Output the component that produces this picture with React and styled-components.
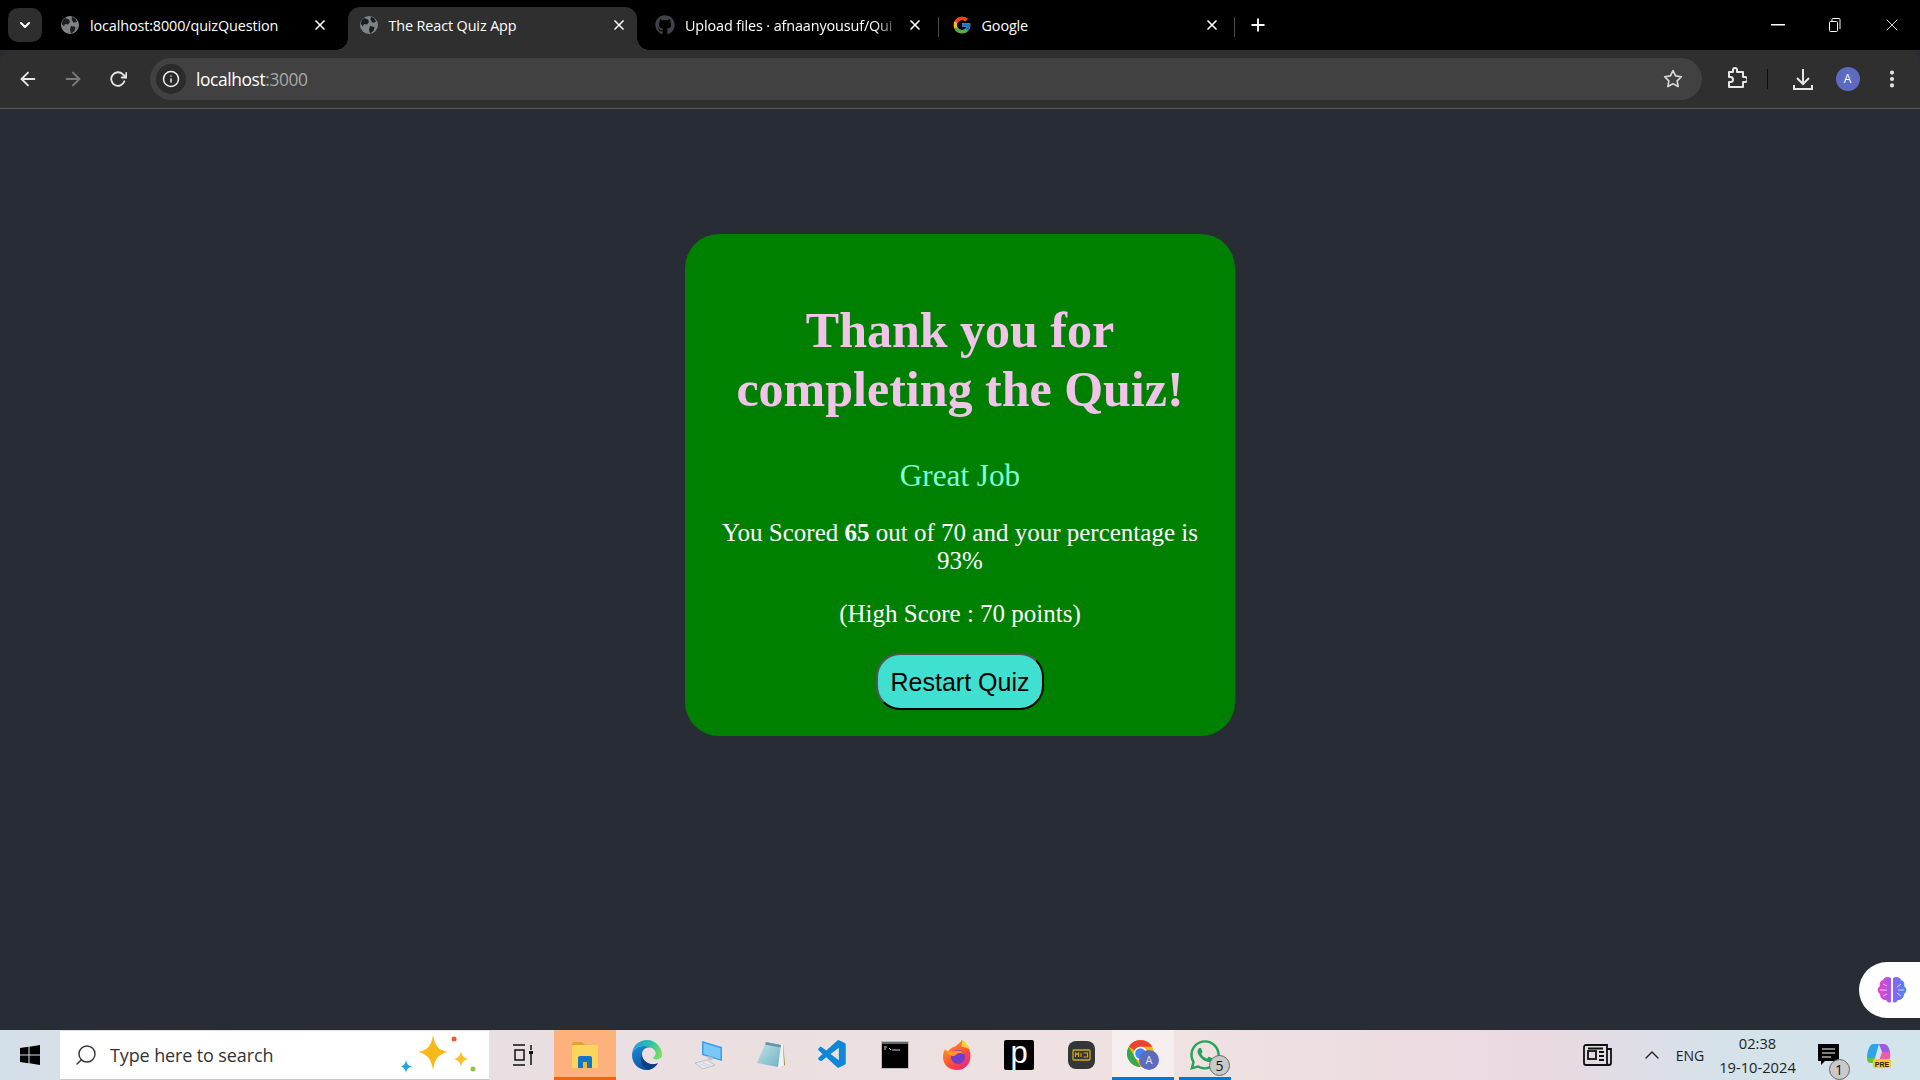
import React from 'react';
import styled, { createGlobalStyle } from 'styled-components';
import { FaGithub, FaWhatsapp } from 'react-icons/fa';
import { FcGoogle } from 'react-icons/fc';
import { VscVscode } from 'react-icons/vsc';
import { FiArrowLeft, FiArrowRight, FiRotateCw, FiInfo, FiStar, FiX, FiPlus, FiMoreVertical, FiChevronDown, FiChevronUp, FiSearch } from 'react-icons/fi';

const GlobalStyle = createGlobalStyle`
  html, body { margin: 0; padding: 0; height: 100%; overflow: hidden; }
  #root { height: 100%; }
  * { box-sizing: border-box; }
`;

const Screen = styled.div`
  width: 1920px;
  height: 1080px;
  display: flex;
  flex-direction: column;
  position: relative;
  background-color: #282c34;
  font-family: "Open Sans", "Liberation Sans", sans-serif;
`;

const TabStrip = styled.div`
  height: 50px;
  background: #000;
  display: flex;
  align-items: flex-end;
  padding-left: 8px;
  flex-shrink: 0;
`;

const TabListButton = styled.div`
  width: 34px;
  height: 34px;
  margin: 0 8px 8px 0;
  border-radius: 10px;
  background: #2e2e2e;
  color: #fff;
  display: flex;
  align-items: center;
  justify-content: center;
`;

const Tab = styled.div`
  width: ${p => (p.$active ? '289px' : '297.5px')};
  margin-right: ${p => (p.$active ? '8.5px' : '0')};
  height: 43px;
  padding: 0 0 7px ${p => (p.$active ? '11px' : '10px')};
  display: flex;
  align-items: center;
  position: relative;
  color: #fff;
  font-size: 14.4px;
  letter-spacing: -0.12px;
  border-radius: 12px 12px 0 0;
  background: ${p => (p.$active ? '#2f2f2f' : 'transparent')};

  ${p => p.$active && `
    &::before, &::after {
      content: '';
      position: absolute;
      bottom: 0;
      width: 12px;
      height: 12px;
      background: radial-gradient(circle at ${'var(--c)'} 0, #000 11.5px, #2f2f2f 12px);
    }
    &::before { left: -12px; --c: 0; }
    &::after { right: -12px; --c: 100%; }
  `}
`;

const Favicon = styled.div`
  width: 20px;
  height: 20px;
  flex-shrink: 0;
  margin-right: 10px;
  display: flex;
  align-items: center;
  justify-content: center;
  color: #3f4347;
`;

const TabTitle = styled.div`
  width: 216px;
  white-space: nowrap;
  ${p => p.$fade && `-webkit-mask-image: linear-gradient(90deg, #000 88%, transparent);`}
`;

const TabClose = styled.div`
  width: 20px;
  margin-left: 4px;
  display: flex;
  justify-content: center;
  color: #fff;
`;

const TabSeparator = styled.div`
  width: 1px;
  height: 20px;
  background: #4a4a4a;
  margin: 0 3px 13px -5px;
  flex-shrink: 0;
`;

const NewTab = styled.div`
  width: 24px;
  height: 36px;
  margin: 0 0 7px 8px;
  display: flex;
  align-items: center;
  justify-content: center;
  color: #fff;
`;

const WindowControls = styled.div`
  margin-left: auto;
  display: flex;
  height: 50px;
  align-items: center;
  padding-bottom: 1px;
`;

const WindowButton = styled.div`
  width: 57px;
  display: flex;
  justify-content: center;
  color: #fff;
`;

const Toolbar = styled.div`
  height: 59px;
  background: #2f2f2f;
  border-bottom: 1px solid #5a5a5a;
  border-radius: 12px 12px 0 0;
  display: flex;
  align-items: center;
  padding: 0 0 1px 5px;
  flex-shrink: 0;
`;

const NavButton = styled.div`
  width: ${p => p.$w || 45}px;
  display: flex;
  justify-content: center;
  align-items: center;
  color: ${p => (p.$dim ? '#7b7b7b' : '#e6e6e6')};
`;

const Omnibox = styled.div`
  width: 1552px;
  height: 42px;
  margin: 0 12px 0 10px;
  background: #414141;
  border-radius: 21px;
  display: flex;
  align-items: center;
  padding: 0 19px 0 6px;
`;

const SiteInfo = styled.div`
  width: 30px;
  height: 30px;
  border-radius: 50%;
  background: #2b2b2b;
  color: #f0f0f0;
  display: flex;
  align-items: center;
  justify-content: center;
  margin-right: 10px;
`;

const Url = styled.div`
  flex: 1;
  font-size: 17.4px;
  letter-spacing: -0.4px;
  color: #fff;
  span { color: #a8a8a8; }
`;

const ToolbarDivider = styled.div`
  width: 1px;
  height: 20px;
  background: #0c0c0c;
  margin: 0 4.5px 0 9px;
`;

const Avatar = styled.div`
  width: 24px;
  height: 24px;
  border-radius: 50%;
  background: #5c6bc0;
  color: #fff;
  font-size: 12px;
  display: flex;
  align-items: center;
  justify-content: center;
  margin: 0 18.5px 0 3px;
`;

const Page = styled.main`
  flex: 1;
  display: flex;
  justify-content: center;
  align-items: flex-start;
  padding-top: 125px;
`;

const Card = styled.section`
  width: 550px;
  background-color: #008000;
  border-radius: 34px;
  padding: 67px 30px 26px;
  display: flex;
  flex-direction: column;
  align-items: center;
  text-align: center;
  font-family: "Liberation Serif", "Times New Roman", serif;
  color: #fff;
`;

const Title = styled.h1`
  font-size: 50px;
  font-weight: bold;
  line-height: 58.6px;
  margin: 0;
  color: #f2c4ea;
`;

const Verdict = styled.h2`
  font-size: 31.2px;
  line-height: 34px;
  font-weight: normal;
  margin: 41px 0 0;
  color: #7fffd4;
`;

const ScoreLine = styled.p`
  font-size: 25px;
  line-height: 27.6px;
  margin: 26px 0 0;
`;

const RestartButton = styled.button`
  width: 168px;
  height: 57px;
  margin-top: 25.5px;
  padding: 2px 0 0;
  font-family: "Liberation Sans", Arial, sans-serif;
  font-size: 25px;
  color: #000;
  background: #40e0d0;
  border: 2px outset #000;
  border-radius: 24px;
`;

const FloatingWidget = styled.div`
  position: absolute;
  right: 0;
  top: 962px;
  width: 61px;
  height: 56px;
  background: #fff;
  border-radius: 28px 0 0 28px;
  display: flex;
  align-items: center;
  padding-left: 18px;
`;

const Taskbar = styled.footer`
  height: 50px;
  flex-shrink: 0;
  display: flex;
  align-items: stretch;
  background: linear-gradient(90deg, #d3dfe9 0%, #e6dfe4 12%, #ecdfe0 40%, #efe2e1 62%, #ead9e2 80%, #d5e2ea 90%, #d3e4ec 100%);
  color: #1c1c1c;
  position: relative;
`;

const StartButton = styled.div`
  width: 60px;
  display: flex;
  align-items: center;
  justify-content: center;
`;

const SearchBox = styled.div`
  width: 429px;
  margin-top: 1px;
  background: #fff;
  border-bottom: 1px solid #c9c9c9;
  display: flex;
  align-items: center;
  padding: 0 8px 0 14px;
  font-size: 18px;
  letter-spacing: -0.12px;
  color: #333;
`;

const SearchText = styled.div`
  flex: 1;
  margin-left: 12px;
`;

const TaskItem = styled.div`
  width: 62px;
  display: flex;
  align-items: center;
  justify-content: center;
  position: relative;
  background: ${p => p.$bg || 'transparent'};

  ${p => p.$bar && `
    &::after {
      content: '';
      position: absolute;
      left: ${p.$inset ? '5px' : '0'};
      right: ${p.$inset ? '5px' : '0'};
      bottom: 0;
      height: 3px;
      background: ${p.$bar};
    }
  `}
`;

const TaskItems = styled.div`
  display: flex;
  margin-left: 3px;
`;

const PLogo = styled.div`
  width: 30px;
  height: 30px;
  border-radius: 2px;
  background: #000;
  color: #fff;
  font-family: "Liberation Sans", sans-serif;
  font-size: 31px;
  line-height: 25px;
  text-align: center;
`;

const CountBadge = styled.div`
  position: absolute;
  right: ${p => p.$right}px;
  bottom: ${p => p.$bottom}px;
  width: 21px;
  height: 21px;
  border-radius: 50%;
  background: #c9c9c9;
  border: 1px solid #666;
  color: #111;
  font-size: 14px;
  line-height: 19px;
  text-align: center;
`;

const Tray = styled.div`
  margin-left: auto;
  display: flex;
  align-items: center;
  padding-right: 13.5px;
`;

const TrayItem = styled.div`
  width: ${p => p.$w}px;
  display: flex;
  align-items: center;
  justify-content: center;
  position: relative;
  font-size: 14px;
  color: #222;
`;

const Clock = styled.div`
  width: 96px;
  margin-left: 2.5px;
  text-align: center;
  font-size: 14.7px;
  line-height: 24px;
  color: #222;
`;

const GlobeIcon = () => (
  <svg width="18" height="18" viewBox="0 0 18 18">
    <circle cx="9" cy="9" r="9" fill="#7f8387" />
    <path d="M4 2 8 3.500l1 2.500-2 2.500-3-.5-1 2.500L.8 8C1 5.500 2.400 3 4 2zM10 10l4.500 1-1 4-3.500 2.500L9 13.500zM11 .8l3.500 1.700L16 6l-3.500.7L10.500 3.500z" fill="#1b1d20" />
  </svg>
);

const RestoreIcon = () => (
  <svg width="14" height="14" viewBox="0 0 14 14" fill="none" stroke="#fff" strokeWidth="1">
    <rect x="1.500" y="3.500" width="8" height="10" rx="1" />
    <path d="M4 3.500V1.500a1 1 0 0 1 1-1h6a1 1 0 0 1 1 1V11" />
  </svg>
);

const ExtensionIcon = () => (
  <svg width="22" height="24" viewBox="0 0 22 24" fill="none" stroke="#e6e6e6" strokeWidth="2" strokeLinejoin="round">
    <path d="M4 5h4V3a2 2 0 0 1 4 0v2h6v5h2a2.500 2.500 0 0 1 0 5h-2v5H4v-5h1.500a2.500 2.500 0 0 0 0-5H4z" />
  </svg>
);

const DownloadIcon = () => (
  <svg width="22" height="24" viewBox="0 0 22 24" fill="none" stroke="#e6e6e6" strokeWidth="2">
    <path d="M11 2v14M5 11l6 6 6-6M2 18v4h18v-4" />
  </svg>
);

const WindowsLogo = () => (
  <svg width="20" height="20" viewBox="0 0 20 20" fill="#000">
    <path d="M0 3l8.500-1.200v7.700H0zM9.500 1.700L20 0v9.500H9.500zM0 10.500h8.500v7.700L0 17zM9.500 10.500H20V20L9.500 18.300z" />
  </svg>
);

const Sparkles = () => (
  <svg width="80" height="42" viewBox="0 0 80 42">
    <path d="M32 1c2 12 6 15 15 17-9 2-13 6-15 18-2-12-6-16-15-18 9-2 13-5 15-17z" fill="#f9b81a" />
    <path d="M60 17c1 5 3 7 7 8-4 1-6 3-7 8-1-5-3-7-7-8 4-1 6-3 7-8z" fill="#f9c02c" />
    <path d="M5 26c.8 4 2 5.500 6 6.500-4 1-5.200 2.500-6 6.500-.8-4-2-5.500-5-6.500 3-1 4.200-2.500 5-6.500z" fill="#1ea7e8" />
    <circle cx="53" cy="5" r="2.500" fill="#ef5b25" />
    <circle cx="72" cy="35" r="2.500" fill="#8cc63f" />
  </svg>
);

const TaskViewIcon = () => (
  <svg width="22" height="22" viewBox="0 0 22 22" fill="none" stroke="#111" strokeWidth="1.500">
    <path d="M1 1h12M1 21h12M3 6h9v10H3zM19 1v5M19 10v11" />
    <rect x="17" y="7" width="4" height="3" fill="#111" stroke="none" />
  </svg>
);

const ExplorerIcon = () => (
  <svg width="28" height="28" viewBox="0 0 28 28">
    <path d="M1 3a2 2 0 0 1 2-2h8l3 3h-13z" fill="#e0a526" />
    <rect x="1" y="4" width="26" height="23" rx="1.500" fill="#fcd55f" />
    <path d="M7 27V17a2 2 0 0 1 2-2h10a2 2 0 0 1 2 2v10h-5v-6h-4v6z" fill="#1673c9" />
    <rect x="12" y="21" width="4" height="6" fill="#f5b81d" />
  </svg>
);

const EdgeIcon = () => (
  <svg width="30" height="30" viewBox="0 0 30 30">
    <defs>
      <linearGradient id="edgeTop" x1="0" y1="0.3" x2="1" y2="0.6">
        <stop offset="0" stopColor="#1c9bd8" />
        <stop offset=".55" stopColor="#2cc3a8" />
        <stop offset="1" stopColor="#7fdc62" />
      </linearGradient>
      <linearGradient id="edgeBody" x1="0" y1="0" x2="0.6" y2="1">
        <stop offset="0" stopColor="#1a8ed8" />
        <stop offset="1" stopColor="#0c4f9c" />
      </linearGradient>
    </defs>
    <path d="M15 0C6.500 0 0 6.500 0 15c0-5 5-9 12-9 6 0 10 2.500 11.500 6 .5 1.500 0 3.500-1.500 5-1 1-1 1.500 0 2 3 1 8 .2 8-4C30 7 23.500 0 15 0z" fill="url(#edgeTop)" />
    <path d="M0 15c0-5 5-9 12-9 3 0 6 .8 8 2-5-1.500-10 1-10 6.500 0 6 6 10.500 13 9.500 1 0 2-.4 3-.8-3 4-7 6.800-11.500 6.800C6.500 30 0 23.500 0 15z" fill="url(#edgeBody)" />
    <path d="M10 14.500c0 6 6 10.500 13 9.500 1 0 2-.4 3-.8-3 4-6 6-9 6.500-6-1-10-7-7-15.200z" fill="#0a3f86" />
  </svg>
);

const PcIcon = () => (
  <svg width="30" height="28" viewBox="0 0 30 28">
    <path d="M8 0l20 6v14L8 14z" fill="#3a9fe6" />
    <path d="M9.500 2l17 5.200v11L9.500 13z" fill="#79c8f7" />
    <path d="M14 15l5 1.500-1 3-4-1z" fill="#b9c2c9" />
    <path d="M1 22l12-3 8 5-12 4z" fill="#e6eaee" stroke="#a9b2ba" strokeWidth=".7" />
    <path d="M5 22.500l8 3M8 21.500l8 3" stroke="#b9c2c9" strokeWidth=".6" />
  </svg>
);

const NotepadIcon = () => (
  <svg width="28" height="28" viewBox="0 0 28 28">
    <defs>
      <linearGradient id="padFill" x1="0" y1="0" x2="1" y2="1">
        <stop offset="0" stopColor="#c4e4ea" />
        <stop offset="1" stopColor="#6fb1c2" />
      </linearGradient>
    </defs>
    <path d="M26 2l2 22-3 2z" fill="#a5884e" />
    <path d="M23 3l3 0 1 22-7 2z" fill="#f1f3f3" />
    <path d="M9 1l15 3-3 22L0 22z" fill="url(#padFill)" />
    <path d="M9 1l15 3-.5 2.500L8 3.500z" fill="#5f95a5" />
  </svg>
);

const TerminalIcon = () => (
  <svg width="28" height="28" viewBox="0 0 28 28">
    <rect x="0" y="0" width="28" height="28" fill="#b9bdc0" />
    <rect x="1" y="1" width="26" height="2" fill="#5c6870" />
    <rect x="1" y="3" width="26" height="24" fill="#000" />
    <path d="M3 6h3M3 8h2M8 7l2 2M11 9h8" stroke="#ccc" strokeWidth="1" />
  </svg>
);

const FirefoxIcon = () => (
  <svg width="28" height="30" viewBox="0 0 28 30">
    <defs>
      <linearGradient id="foxA" x1="0.1" y1="0.1" x2="0.8" y2="1">
        <stop offset="0" stopColor="#ff9a1f" />
        <stop offset=".6" stopColor="#ff4b3a" />
        <stop offset="1" stopColor="#e8208a" />
      </linearGradient>
    </defs>
    <path d="M19 0c4 3 7 7 8 12 2 9-3 18-13 18C5 30 0 24 0 17c0-3 .8-6 2-8 .5 2 1 3 2.500 3.500C6 9 9 7.500 12 6.500 14 5 17 3 19 0z" fill="url(#foxA)" />
    <path d="M19 0c3 2 6 5 8 10-3-2.500-5-3.500-9-3 .8-2 1.200-4 1-7z" fill="#ffd22f" />
    <circle cx="15" cy="17" r="7" fill="#6f3fc9" />
    <path d="M2 9c3 3 6 3 11 2 3-.5 6-.5 8 3-4-2-7-.5-8 1 -3 2-9 1-11-6z" fill="#ff9a1f" />
  </svg>
);

const DevIcon = () => (
  <svg width="27" height="28" viewBox="0 0 27 28">
    <rect width="27" height="28" rx="8" fill="#333638" />
    <rect x="5" y="9" width="17" height="10" rx="1" fill="none" stroke="#d9a516" strokeWidth="1.300" />
    <path d="M7.500 16v-4l1.500 1.500 1.500-1.500v4M13 12v4M15.500 12h4v4h-4" fill="none" stroke="#d9a516" strokeWidth="1.100" />
  </svg>
);

const ChromeIcon = () => (
  <svg width="32" height="30" viewBox="0 0 32 30">
    <circle cx="13.500" cy="13.500" r="13.500" fill="#fbbc04" />
    <path d="M13.500 0A13.500 13.500 0 0 1 25.200 6.800H13.500A6.700 6.700 0 0 0 7.700 10.200L1.800 6.800A13.500 13.500 0 0 1 13.500 0z" fill="#ea4335" />
    <path d="M1.800 6.800L7.700 17l5.900 10A13.500 13.500 0 0 1 1.800 6.800z" fill="#34a853" />
    <circle cx="13.500" cy="13.500" r="6.800" fill="#fff" />
    <circle cx="13.500" cy="13.500" r="5.300" fill="#4285f4" />
    <circle cx="22" cy="20" r="10" fill="#5c6bc0" />
    <text x="22" y="24" textAnchor="middle" fontSize="11" fill="#dfe3f5" fontFamily="Open Sans, sans-serif">A</text>
  </svg>
);

const NewsIcon = () => (
  <svg width="30" height="22" viewBox="0 0 30 22" fill="none" stroke="#111" strokeWidth="1.800">
    <path d="M1 3a2 2 0 0 1 2-2h21v18a2 2 0 0 0 4 0V5h-4M3 21h23M1 3v16a2 2 0 0 0 2 2" />
    <rect x="5" y="7" width="8" height="8" />
    <path d="M5 4.500h15M16 8h5M16 12h5M16 16h5" />
  </svg>
);

const NotificationIcon = () => (
  <svg width="21" height="22" viewBox="0 0 21 22">
    <path d="M0 0h21v17H7l-4 4v-4H0z" fill="#000" />
    <path d="M4 5h13M4 9h13M4 13h9" stroke="#fff" strokeWidth="1" />
  </svg>
);

const CopilotIcon = () => (
  <svg width="26" height="26" viewBox="0 0 26 26">
    <path d="M7 2h6l-4 14H1C1 9 4 2 7 2z" fill="#2ea5e8" />
    <path d="M1 16h8l-1 5H5c-3 0-4-2-4-5z" fill="#6bbf3a" />
    <path d="M13 2h5c3 0 5 3 6 8h-8z" fill="#9a5de0" />
    <path d="M16 10h8c1 5 0 9-5 9h-6z" fill="#e85db0" />
    <rect x="7" y="17" width="18" height="9" rx="2" fill="#ffc81f" />
    <text x="16" y="24.500" textAnchor="middle" fontSize="7" fontWeight="bold" fill="#222" fontFamily="Liberation Sans, sans-serif">PRE</text>
  </svg>
);

const BrainIcon = () => (
  <svg width="30" height="28" viewBox="0 0 30 28">
    <defs>
      <linearGradient id="brainA" x1="0" y1="0" x2="1" y2="0">
        <stop offset="0" stopColor="#ee3fc0" />
        <stop offset=".5" stopColor="#9a5cf0" />
        <stop offset="1" stopColor="#3f8cf5" />
      </linearGradient>
    </defs>
    <path d="M14 2c-3-2-7-1-8 2-3 1-4 4-3 6-3 2-3 6 0 8 0 4 3 6 6 6 2 3 4 3 5 2zM16 2c3-2 7-1 8 2 3 1 4 4 3 6 3 2 3 6 0 8 0 4-3 6-6 6-2 3-4 3-5 2z" fill="url(#brainA)" />
    <path d="M3 14h7M6 8l4 2M6 20l4-2M24 8l-4 3M27 14h-6M24 20l-4-3" stroke="#fff" strokeWidth="1" opacity=".7" />
  </svg>
);

const tabs = [
  { title: 'localhost:8000/quizQuestion', icon: <GlobeIcon /> },
  { title: 'The React Quiz App', icon: <GlobeIcon />, active: true },
  { title: 'Upload files · afnaanyousuf/Qui', icon: <FaGithub size={20} />, fade: true },
  { title: 'Google', icon: <FcGoogle size={20} /> },
];

function BrowserTabs() {
  return (
    <TabStrip>
      <TabListButton><FiChevronDown size={16} strokeWidth={3} /></TabListButton>
      {tabs.map((tab, i) => (
        <React.Fragment key={tab.title}>
          <Tab $active={tab.active}>
            <Favicon>{tab.icon}</Favicon>
            <TabTitle $fade={tab.fade}>{tab.title}</TabTitle>
            <TabClose><FiX size={16} strokeWidth={2.5} /></TabClose>
          </Tab>
          {i >= 2 && <TabSeparator />}
        </React.Fragment>
      ))}
      <NewTab><FiPlus size={20} strokeWidth={2.2} /></NewTab>
      <WindowControls>
        <WindowButton><svg width="14" height="2"><rect width="14" height="1.500" fill="#fff" /></svg></WindowButton>
        <WindowButton><RestoreIcon /></WindowButton>
        <WindowButton><FiX size={20} strokeWidth={1} /></WindowButton>
      </WindowControls>
    </TabStrip>
  );
}

function BrowserToolbar() {
  return (
    <Toolbar>
      <NavButton><FiArrowLeft size={22} /></NavButton>
      <NavButton $dim><FiArrowRight size={22} /></NavButton>
      <NavButton><FiRotateCw size={18} strokeWidth={2.4} /></NavButton>
      <Omnibox>
        <SiteInfo><FiInfo size={18} /></SiteInfo>
        <Url>localhost<span>:3000</span></Url>
        <NavButton $w={20} $dim><FiStar size={20} color="#d8d8d8" /></NavButton>
      </Omnibox>
      <NavButton $w={44}><ExtensionIcon /></NavButton>
      <ToolbarDivider />
      <NavButton $w={60}><DownloadIcon /></NavButton>
      <Avatar>A</Avatar>
      <NavButton $w={28}><FiMoreVertical size={22} strokeWidth={2.5} /></NavButton>
    </Toolbar>
  );
}

function WindowsTaskbar() {
  return (
    <Taskbar>
      <StartButton><WindowsLogo /></StartButton>
      <SearchBox>
        <FiSearch size={24} strokeWidth={1.4} style={{ transform: 'scaleX(-1)' }} />
        <SearchText>Type here to search</SearchText>
        <Sparkles />
      </SearchBox>
      <TaskItems>
        <TaskItem><TaskViewIcon /></TaskItem>
        <TaskItem $bg="#fdb17c" $bar="#f7630c"><ExplorerIcon /></TaskItem>
        <TaskItem><EdgeIcon /></TaskItem>
        <TaskItem><PcIcon /></TaskItem>
        <TaskItem><NotepadIcon /></TaskItem>
        <TaskItem><VscVscode size={34} color="#0f87d8" /></TaskItem>
        <TaskItem><TerminalIcon /></TaskItem>
        <TaskItem><FirefoxIcon /></TaskItem>
        <TaskItem><PLogo>p</PLogo></TaskItem>
        <TaskItem><DevIcon /></TaskItem>
        <TaskItem $bg="#f5f0ef" $bar="#0078d4"><ChromeIcon /></TaskItem>
        <TaskItem $bar="#0078d4" $inset>
          <FaWhatsapp size={34} color="#25a35a" />
          <CountBadge $right={6} $bottom={4}>5</CountBadge>
        </TaskItem>
      </TaskItems>
      <Tray>
        <TrayItem $w={67}><NewsIcon /></TrayItem>
        <TrayItem $w={42}><FiChevronUp size={24} strokeWidth={1.4} /></TrayItem>
        <TrayItem $w={34}>ENG</TrayItem>
        <Clock>02:38<br />19-10-2024</Clock>
        <TrayItem $w={46}>
          <NotificationIcon />
          <CountBadge $right={2} $bottom={-14}>1</CountBadge>
        </TrayItem>
        <TrayItem $w={55}><CopilotIcon /></TrayItem>
      </Tray>
    </Taskbar>
  );
}

export default function App() {
  return (
    <Screen>
      <GlobalStyle />
      <BrowserTabs />
      <BrowserToolbar />
      <Page>
        <Card>
          <Title>Thank you for completing the Quiz!</Title>
          <Verdict>Great Job</Verdict>
          <ScoreLine>You Scored <strong>65</strong> out of 70 and your percentage is 93%</ScoreLine>
          <ScoreLine>(High Score : 70 points)</ScoreLine>
          <RestartButton>Restart Quiz</RestartButton>
        </Card>
      </Page>
      <FloatingWidget><BrainIcon /></FloatingWidget>
      <WindowsTaskbar />
    </Screen>
  );
}
